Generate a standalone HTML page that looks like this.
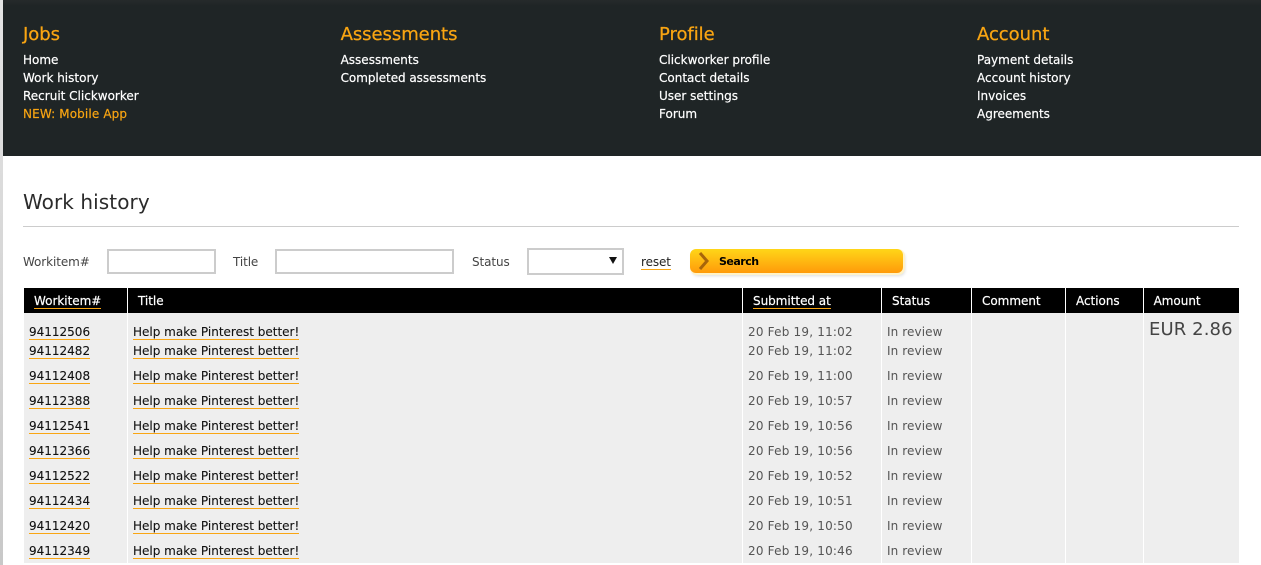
<!DOCTYPE html>
<html><head><meta charset="utf-8"><title>Work history</title>
<style>
html,body{margin:0;padding:0;background:#fff;}
body{position:relative;width:1261px;height:565px;overflow:hidden;font-family:"DejaVu Sans",Verdana,sans-serif;font-size:12px;color:#333;}
div,a,span{position:absolute;white-space:nowrap;}
#strip{left:0;top:0;width:3px;height:565px;background:linear-gradient(#e4e4e4,#c8c8c8);}
#hdr{left:3px;top:0;width:1258px;height:156px;background:linear-gradient(#262a2b 0,#1f2526 6px);}
.h{top:24px;height:22px;line-height:22px;font-size:18px;color:#f9a512;letter-spacing:-.05px;-webkit-text-stroke:.25px #f9a512;}
.n{height:18px;line-height:18px;color:#fff;font-size:12px;letter-spacing:0;-webkit-text-stroke:.2px #fff;}
.o{color:#f9a512;-webkit-text-stroke:.2px #f9a512;letter-spacing:.13px;}
h1{position:absolute;margin:0;left:23px;top:189px;font-size:20px;font-weight:normal;line-height:26px;color:#2b2b2b;letter-spacing:.08px;}
#rule{left:23px;top:226px;width:1216px;height:1px;background:#ccc;}
.l{top:253px;height:18px;line-height:18px;color:#444;letter-spacing:-.1px;}
.i{box-sizing:border-box;border:2px solid #ccc;background:#fff;top:249px;height:25px;}
#btn{left:690px;top:249px;width:213px;height:24px;border-radius:6px;background:linear-gradient(#ffd618,#ff9a0a);box-shadow:1px 1px 0 1px #fff3c8,2px 3px 3px #ddd;}
#tb{left:24px;top:288px;width:1215px;height:25px;background:#000;}
#bd{left:24px;top:313px;width:1215px;height:250px;background:#eee;}
.s{top:288px;width:1px;height:275px;background:#fff;}
.t{top:292px;height:18px;line-height:18px;color:#fff;letter-spacing:-.03px;-webkit-text-stroke:.2px #fff;}
.u{border-bottom:1px solid #f9a512;height:16px!important;}
.c{height:18px;line-height:18px;letter-spacing:0;}
.a{left:29px;color:#111;-webkit-text-stroke:.1px #111;}.b{left:133px;color:#111;-webkit-text-stroke:.1px #111;}.d{left:748px;color:#555;letter-spacing:.2px;}.e{left:887px;color:#555;letter-spacing:.1px;}
.a,.b{height:16px;border-bottom:1px solid #f9a512;}
</style></head><body>
<div id="strip"></div>
<div id="hdr"></div>
<div class="h" style="left:23px">Jobs</div>
<div class="n" style="left:23px;top:51px">Home</div>
<div class="n" style="left:23px;top:69px">Work history</div>
<div class="n" style="left:23px;top:87px">Recruit Clickworker</div>
<div class="n o" style="left:23px;top:105px">NEW: Mobile App</div>
<div class="h" style="left:340.6px">Assessments</div>
<div class="n" style="left:340.6px;top:51px">Assessments</div>
<div class="n" style="left:340.6px;top:69px;letter-spacing:-.05px">Completed assessments</div>
<div class="h" style="left:659px">Profile</div>
<div class="n" style="left:659px;top:51px">Clickworker profile</div>
<div class="n" style="left:659px;top:69px">Contact details</div>
<div class="n" style="left:659px;top:87px">User settings</div>
<div class="n" style="left:659px;top:105px">Forum</div>
<div class="h" style="left:977px">Account</div>
<div class="n" style="left:977px;top:51px">Payment details</div>
<div class="n" style="left:977px;top:69px">Account history</div>
<div class="n" style="left:977px;top:87px">Invoices</div>
<div class="n" style="left:977px;top:105px">Agreements</div>

<h1>Work history</h1>
<div id="rule"></div>
<div class="l" style="left:23px">Workitem#</div>
<div class="i" style="left:107px;width:109px"></div>
<div class="l" style="left:233px">Title</div>
<div class="i" style="left:275px;width:179px"></div>
<div class="l" style="left:472px">Status</div>
<div class="i" style="left:527px;width:97px;top:248px;height:27px"></div>
<svg style="position:absolute;left:609px;top:257px" width="8" height="7"><path d="M0 0H8L4 7Z" fill="#111"/></svg>
<a class="l" style="left:641px;color:#222;height:16px;border-bottom:1px solid #f9a512">reset</a>
<div id="btn"></div>
<svg style="position:absolute;left:698px;top:252px" width="12" height="18"><path d="M2 1L9 9L2 17" fill="none" stroke="#a8650a" stroke-width="3"/></svg>
<div style="left:719px;top:253px;height:18px;line-height:18px;font-weight:bold;color:#000;font-size:11px;letter-spacing:-.5px">Search</div>

<div id="bd"></div>
<div id="tb"></div>
<div class="s" style="left:127px"></div>
<div class="s" style="left:742px"></div>
<div class="s" style="left:881px"></div>
<div class="s" style="left:971px"></div>
<div class="s" style="left:1065px"></div>
<div class="s" style="left:1143px"></div>
<div class="t u" style="left:34px">Workitem#</div>
<div class="t" style="left:138px">Title</div>
<div class="t u" style="left:753px">Submitted at</div>
<div class="t" style="left:892px">Status</div>
<div class="t" style="left:982px">Comment</div>
<div class="t" style="left:1076px">Actions</div>
<div class="t" style="left:1153.6px">Amount</div>
<div style="left:1149px;top:319px;height:22px;line-height:22px;font-size:18px;letter-spacing:.1px;color:#444">EUR 2.86</div>

<div class="c a" style="top:323px">94112506</div><div class="c b" style="top:323px">Help make Pinterest better!</div><div class="c d" style="top:323px">20 Feb 19, 11:02</div><div class="c e" style="top:323px">In review</div>
<div class="c a" style="top:342px">94112482</div><div class="c b" style="top:342px">Help make Pinterest better!</div><div class="c d" style="top:342px">20 Feb 19, 11:02</div><div class="c e" style="top:342px">In review</div>
<div class="c a" style="top:367px">94112408</div><div class="c b" style="top:367px">Help make Pinterest better!</div><div class="c d" style="top:367px">20 Feb 19, 11:00</div><div class="c e" style="top:367px">In review</div>
<div class="c a" style="top:392px">94112388</div><div class="c b" style="top:392px">Help make Pinterest better!</div><div class="c d" style="top:392px">20 Feb 19, 10:57</div><div class="c e" style="top:392px">In review</div>
<div class="c a" style="top:417px">94112541</div><div class="c b" style="top:417px">Help make Pinterest better!</div><div class="c d" style="top:417px">20 Feb 19, 10:56</div><div class="c e" style="top:417px">In review</div>
<div class="c a" style="top:442px">94112366</div><div class="c b" style="top:442px">Help make Pinterest better!</div><div class="c d" style="top:442px">20 Feb 19, 10:56</div><div class="c e" style="top:442px">In review</div>
<div class="c a" style="top:467px">94112522</div><div class="c b" style="top:467px">Help make Pinterest better!</div><div class="c d" style="top:467px">20 Feb 19, 10:52</div><div class="c e" style="top:467px">In review</div>
<div class="c a" style="top:492px">94112434</div><div class="c b" style="top:492px">Help make Pinterest better!</div><div class="c d" style="top:492px">20 Feb 19, 10:51</div><div class="c e" style="top:492px">In review</div>
<div class="c a" style="top:517px">94112420</div><div class="c b" style="top:517px">Help make Pinterest better!</div><div class="c d" style="top:517px">20 Feb 19, 10:50</div><div class="c e" style="top:517px">In review</div>
<div class="c a" style="top:542px">94112349</div><div class="c b" style="top:542px">Help make Pinterest better!</div><div class="c d" style="top:542px">20 Feb 19, 10:46</div><div class="c e" style="top:542px">In review</div>
</body></html>
